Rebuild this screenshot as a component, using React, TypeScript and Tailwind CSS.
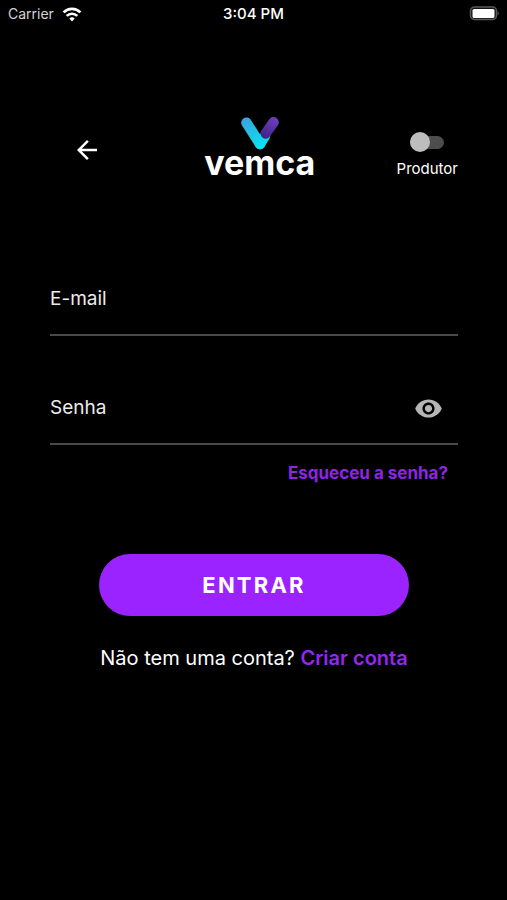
import React, { useState } from 'react';
import { MdArrowBack, MdVisibility } from 'react-icons/md';

const StatusBar: React.FC = () => (
  <div className="grid grid-cols-3 items-center h-7 px-2 text-sm">
    <div className="flex items-center gap-2 text-[#d4d4d4]">
      <span>Carrier</span>
      <svg viewBox="0 0 20 15" className="w-5 h-[15px]" fill="none" stroke="#fff" strokeWidth="2.7">
        <path d="M1.6 5.4a12 12 0 0 1 16.8 0" />
        <path d="M4.7 8.9a7.6 7.6 0 0 1 10.6 0" />
        <path d="M10 14.4l-2.7-2.9a3.8 3.8 0 0 1 5.4 0z" fill="#fff" stroke="none" />
      </svg>
    </div>
    <span className="text-center text-[15px] text-white font-medium">3:04 PM</span>
    <svg viewBox="0 0 30 16" className="w-[30px] h-4 justify-self-end">
      <rect x="1.5" y="1" width="26" height="12.5" rx="4" fill="#111" stroke="#5a5a5a" strokeWidth="1.5" />
      <rect x="3.5" y="3" width="22" height="9" rx="1.5" fill="#fff" />
      <path d="M28.6 5q2 2.3 0 4.6z" fill="#666" />
    </svg>
  </div>
);

const Logo: React.FC = () => (
  <div className="flex flex-col items-center gap-px">
    <svg viewBox="0 0 40 34" className="w-10 h-[34px]" fill="none" strokeWidth="10.4" strokeLinecap="round">
      <defs>
        <linearGradient id="cyan" gradientUnits="userSpaceOnUse" x1="6" y1="4" x2="22" y2="32">
          <stop offset="0" stopColor="#38a6e0" />
          <stop offset="1" stopColor="#06e6f0" />
        </linearGradient>
        <linearGradient id="purple" gradientUnits="userSpaceOnUse" x1="34" y1="4" x2="23" y2="24">
          <stop offset="0" stopColor="#6c3bbd" />
          <stop offset="1" stopColor="#38207c" />
        </linearGradient>
      </defs>
      <path d="M20 28L25 20" stroke="url(#cyan)" />
      <path d="M33.6 6.2L25.6 17.6" stroke="url(#purple)" />
      <path d="M6.4 6.6L20 28" stroke="url(#cyan)" />
    </svg>
    <span className="text-[34px] leading-6 font-bold text-white">vemca</span>
  </div>
);

const App: React.FC = () => {
  const [producer, setProducer] = useState(false);
  const [showPassword, setShowPassword] = useState(false);

  return (
    <div className="min-h-screen bg-black text-white font-['Inter',sans-serif]">
      <StatusBar />

      <main className="pl-[50px] pr-[49px] pt-[88px]">
        {/* Header */}
        <header className="flex items-start justify-between h-[66px]">
          <button type="button" aria-label="Voltar" className="flex justify-center w-[73px] pt-[19px]">
            <MdArrowBack className="size-[30px]" />
          </button>
          <Logo />
          <label className="flex flex-col items-center gap-[6px] pt-4 text-[15px] cursor-pointer">
            <span className="relative flex items-center w-[34px] h-5">
              <input
                type="checkbox"
                role="switch"
                checked={producer}
                onChange={(e) => setProducer(e.target.checked)}
                className="peer appearance-none w-full h-[13px] rounded-full bg-[#4d4d4d] checked:bg-[#9b23ff]"
              />
              <span className="absolute left-0 size-5 rounded-full bg-[#bdbdbd] peer-checked:left-auto peer-checked:right-0" />
            </span>
            Produtor
          </label>
        </header>

        {/* Login form */}
        <form className="pt-[82px]" onSubmit={(e) => e.preventDefault()}>
          <div className="flex items-center gap-3 h-[72px] border-b-2 border-[#4a4a4a] text-[19px]">
            <label htmlFor="email" className="text-[#ececec]">E-mail</label>
            <input id="email" type="email" className="flex-1 min-w-0 bg-transparent outline-none" />
          </div>

          <div className="flex items-center gap-3 h-[72px] mt-[37px] pr-[15px] border-b-2 border-[#4a4a4a] text-[19px]">
            <label htmlFor="password" className="text-[#ececec]">Senha</label>
            <input
              id="password"
              type={showPassword ? 'text' : 'password'}
              className="flex-1 min-w-0 bg-transparent outline-none"
            />
            <button type="button" aria-label="Mostrar senha" onClick={() => setShowPassword(!showPassword)}>
              <MdVisibility className="size-[29px] text-[#b5b5b5]" />
            </button>
          </div>

          <div className="flex justify-end pt-4 pr-[10px]">
            <a href="#" className="text-[17px] leading-6 font-bold text-[#8f24e6]">Esqueceu a senha?</a>
          </div>

          <div className="px-[49px] pt-[69px]">
            <button type="submit" className="w-full h-[62px] rounded-full bg-[#9b23ff] text-[22px] font-bold tracking-widest">
              ENTRAR
            </button>
          </div>
        </form>

        <p className="pt-7 text-center text-xl">
          Não tem uma conta?{' '}
          <a href="#" className="font-semibold text-[#9527ee]">Criar conta</a>
        </p>
      </main>
    </div>
  );
};

export default App;
